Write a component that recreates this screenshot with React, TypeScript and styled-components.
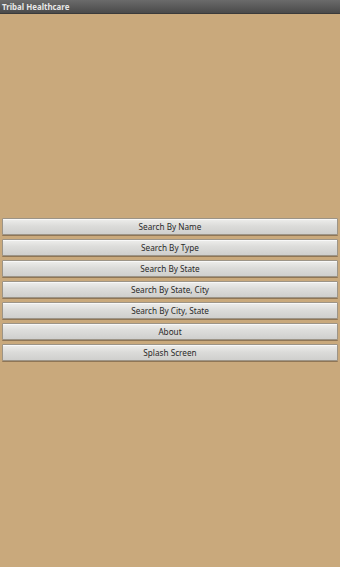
import React from "react";
import styled, { createGlobalStyle } from "styled-components";

const Global = createGlobalStyle`
  html, body { margin: 0; padding: 0; height: 100%; }
  body { background: #c9a97c; font-family: "Noto Sans", "Open Sans", sans-serif; }
  #root { height: 100%; }
`;

const Screen = styled.div`
  display: flex;
  flex-direction: column;
  width: 340px;
  height: 567px;
  background: #c9a97c;
`;

const TitleBar = styled.div`
  height: 14px;
  flex: 0 0 14px;
  display: flex;
  align-items: center;
  padding-left: 2px;
  background: linear-gradient(#6b6b6b, #4a4a4a);
  border-bottom: 1px solid #3a3a3a;
  box-sizing: border-box;
  color: #e8e8e8;
  font-family: "Noto Sans", "Open Sans", sans-serif;
  font-weight: 700;
  font-size: 7.9px;
`;

const Content = styled.div`
  flex: 1;
  display: flex;
  flex-direction: column;
  justify-content: center;
  gap: 4px;
  padding: 0 2px 2px;
`;

const Button = styled.button`
  height: 17px;
  margin: 0;
  padding: 0;
  border: 1px solid #9c9487;
  border-radius: 1px;
  background: linear-gradient(#eeeeec 0%, #dcdcda 45%, #cfcfcd 100%);
  box-shadow: 0 1px 0 #8f7656, inset 0 1px 0 #f8f8f8;
  color: #2a2a2a;
  font-family: "Noto Sans", "Open Sans", sans-serif;
  font-size: 8.2px;
  display: flex;
  align-items: center;
  justify-content: center;
  box-sizing: border-box;
`;

const items = [
  "Search By Name",
  "Search By Type",
  "Search By State",
  "Search By State, City",
  "Search By City, State",
  "About",
  "Splash Screen",
];

export default function App() {
  return (
    <>
      <Global />
      <Screen>
        <TitleBar>Tribal Healthcare</TitleBar>
        <Content>
          {items.map((t) => (
            <Button key={t}>{t}</Button>
          ))}
        </Content>
      </Screen>
    </>
  );
}
